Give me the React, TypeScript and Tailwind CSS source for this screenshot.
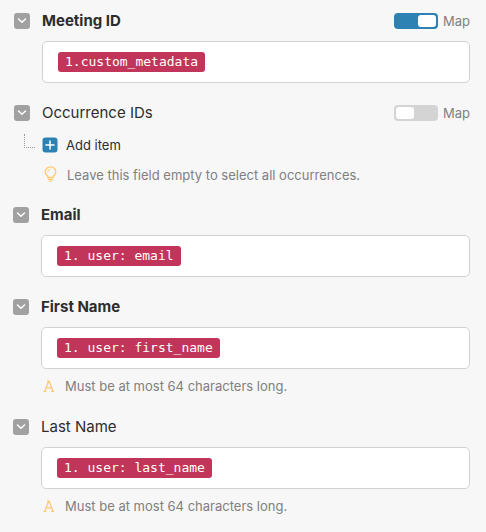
import { useState, type ReactNode } from "react";

function ChevronButton({ label }: { label: string }) {
  return (
    <button
      type="button"
      aria-label={`Toggle ${label}`}
      className="flex size-4 shrink-0 items-center justify-center rounded-[3px] bg-[#a1a1a1]"
    >
      <svg viewBox="0 0 16 16" className="size-4" fill="none" stroke="#fff" strokeWidth="1.5" strokeLinecap="round" strokeLinejoin="round">
        <path d="M4.5 6 8 9.2 11.5 6" />
      </svg>
    </button>
  );
}

function MapSwitch({ id, initial }: { id: string; initial: boolean }) {
  const [on, setOn] = useState(initial);
  return (
    <label htmlFor={id} className="flex items-center gap-[5px] text-[13px] leading-5 text-[#808080]">
      <input
        id={id}
        type="checkbox"
        checked={on}
        onChange={(e) => setOn(e.target.checked)}
        className="flex h-4 w-11 appearance-none items-center rounded bg-[#d4d4d4] p-0.5 before:h-3 before:w-[18px] before:rounded-[3px] before:bg-white before:content-[''] checked:justify-end checked:bg-[#2c82b3]"
      />
      Map
    </label>
  );
}

function FieldHeader({ id, title, bold, children }: { id: string; title: string; bold?: boolean; children?: ReactNode }) {
  return (
    <div className="flex h-5 items-center gap-3">
      <ChevronButton label={title} />
      <label htmlFor={id} className={`flex-1 text-[15px] leading-5 text-[#2d2d2d] ${bold ? "font-bold" : ""}`}>
        {title}
      </label>
      {children}
    </div>
  );
}

function ChipInput({ id, chip }: { id: string; chip: string }) {
  return (
    <div className="mt-2.5 ml-7 flex h-[42px] items-center rounded-[5px] border border-[#d2d2d2] bg-white px-[15px]">
      <span className="h-5 shrink-0 rounded-[3px] bg-[#c1355a] px-[7px] font-['DejaVu_Sans_Mono',monospace] text-[13px] leading-5 whitespace-pre text-white">
        {chip}
      </span>
      <input id={id} type="text" className="min-w-0 flex-1 bg-transparent outline-none" />
    </div>
  );
}

function LengthHint() {
  return (
    <p className="mt-[7px] mb-px ml-7 flex h-5 items-center gap-[9px] text-[13px] leading-5 text-[#808080]">
      <svg viewBox="0 0 15 14" className="h-3.5 w-[15px] shrink-0" fill="none" stroke="#fdc873" strokeWidth="1.2">
        <path d="M3.8 12.2 7.6 2.2h.5l3.9 10M5 8.9h5.8M2.4 12.3h3M10 12.3h3.1M6 2h2.1" />
      </svg>
      Must be at most 64 characters long.
    </p>
  );
}

export default function App() {
  return (
    <main className="min-h-screen bg-[#f7f7f7] pt-[11px] pr-4 pb-3.5 font-['Inter',sans-serif]">
      <section className="flex flex-col gap-5 pl-3.5">
        <div>
          <FieldHeader id="meeting-id" title="Meeting ID" bold>
            <MapSwitch id="meeting-map" initial={true} />
          </FieldHeader>
          <ChipInput id="meeting-id" chip="1.custom_metadata" />
        </div>
        <div>
          <FieldHeader id="add-occurrence" title="Occurrence IDs">
            <MapSwitch id="occurrence-map" initial={false} />
          </FieldHeader>
          <div className="mt-3 flex h-5 items-center pl-2.5">
            <span className="h-3.5 w-[11px] -translate-y-1 border-b border-l border-dotted border-[#999]" />
            <button id="add-occurrence" type="button" className="ml-[7px] flex items-center gap-2 text-[13px] leading-5 text-[#2d2d2d]">
              <svg viewBox="0 0 16 16" className="size-4" fill="none">
                <rect x="0.5" y="0.5" width="15" height="15" rx="3" fill="#2c82b3" />
                <path d="M8 4v8M4 8h8" stroke="#fff" strokeWidth="1.5" strokeLinecap="round" />
              </svg>
              Add item
            </button>
          </div>
          <p className="mt-2.5 ml-7 flex h-5 items-center gap-[9px] text-[13px] leading-5 text-[#808080]">
            <svg viewBox="0 0 16 18" className="h-[18px] w-4 shrink-0" fill="none" stroke="#fdc96f" strokeLinecap="round">
              <path d="M6 11.5C6 9.2 3.2 8.6 3.2 5.8a5.3 5 0 0 1 10.6 0c0 2.8-2.8 3.4-2.8 5.7Z" strokeWidth="1.3" />
              <path d="M6.2 13.3h4.6M7.4 15.1h2.2" strokeWidth="1.3" />
              <path d="M5.6 5.7a2.8 2.8 0 0 1 2.6-2.5" strokeWidth="0.9" />
            </svg>
            Leave this field empty to select all occurrences.
          </p>
        </div>
      </section>
      <section className="mt-5 flex flex-col gap-5 pl-[13px]">
        <div>
          <FieldHeader id="email" title="Email" bold />
          <ChipInput id="email" chip="1. user: email" />
        </div>
        <div>
          <FieldHeader id="first-name" title="First Name" bold />
          <ChipInput id="first-name" chip="1. user: first_name" />
          <LengthHint />
        </div>
        <div>
          <FieldHeader id="last-name" title="Last Name" />
          <ChipInput id="last-name" chip="1. user: last_name" />
          <LengthHint />
        </div>
      </section>
    </main>
  );
}
